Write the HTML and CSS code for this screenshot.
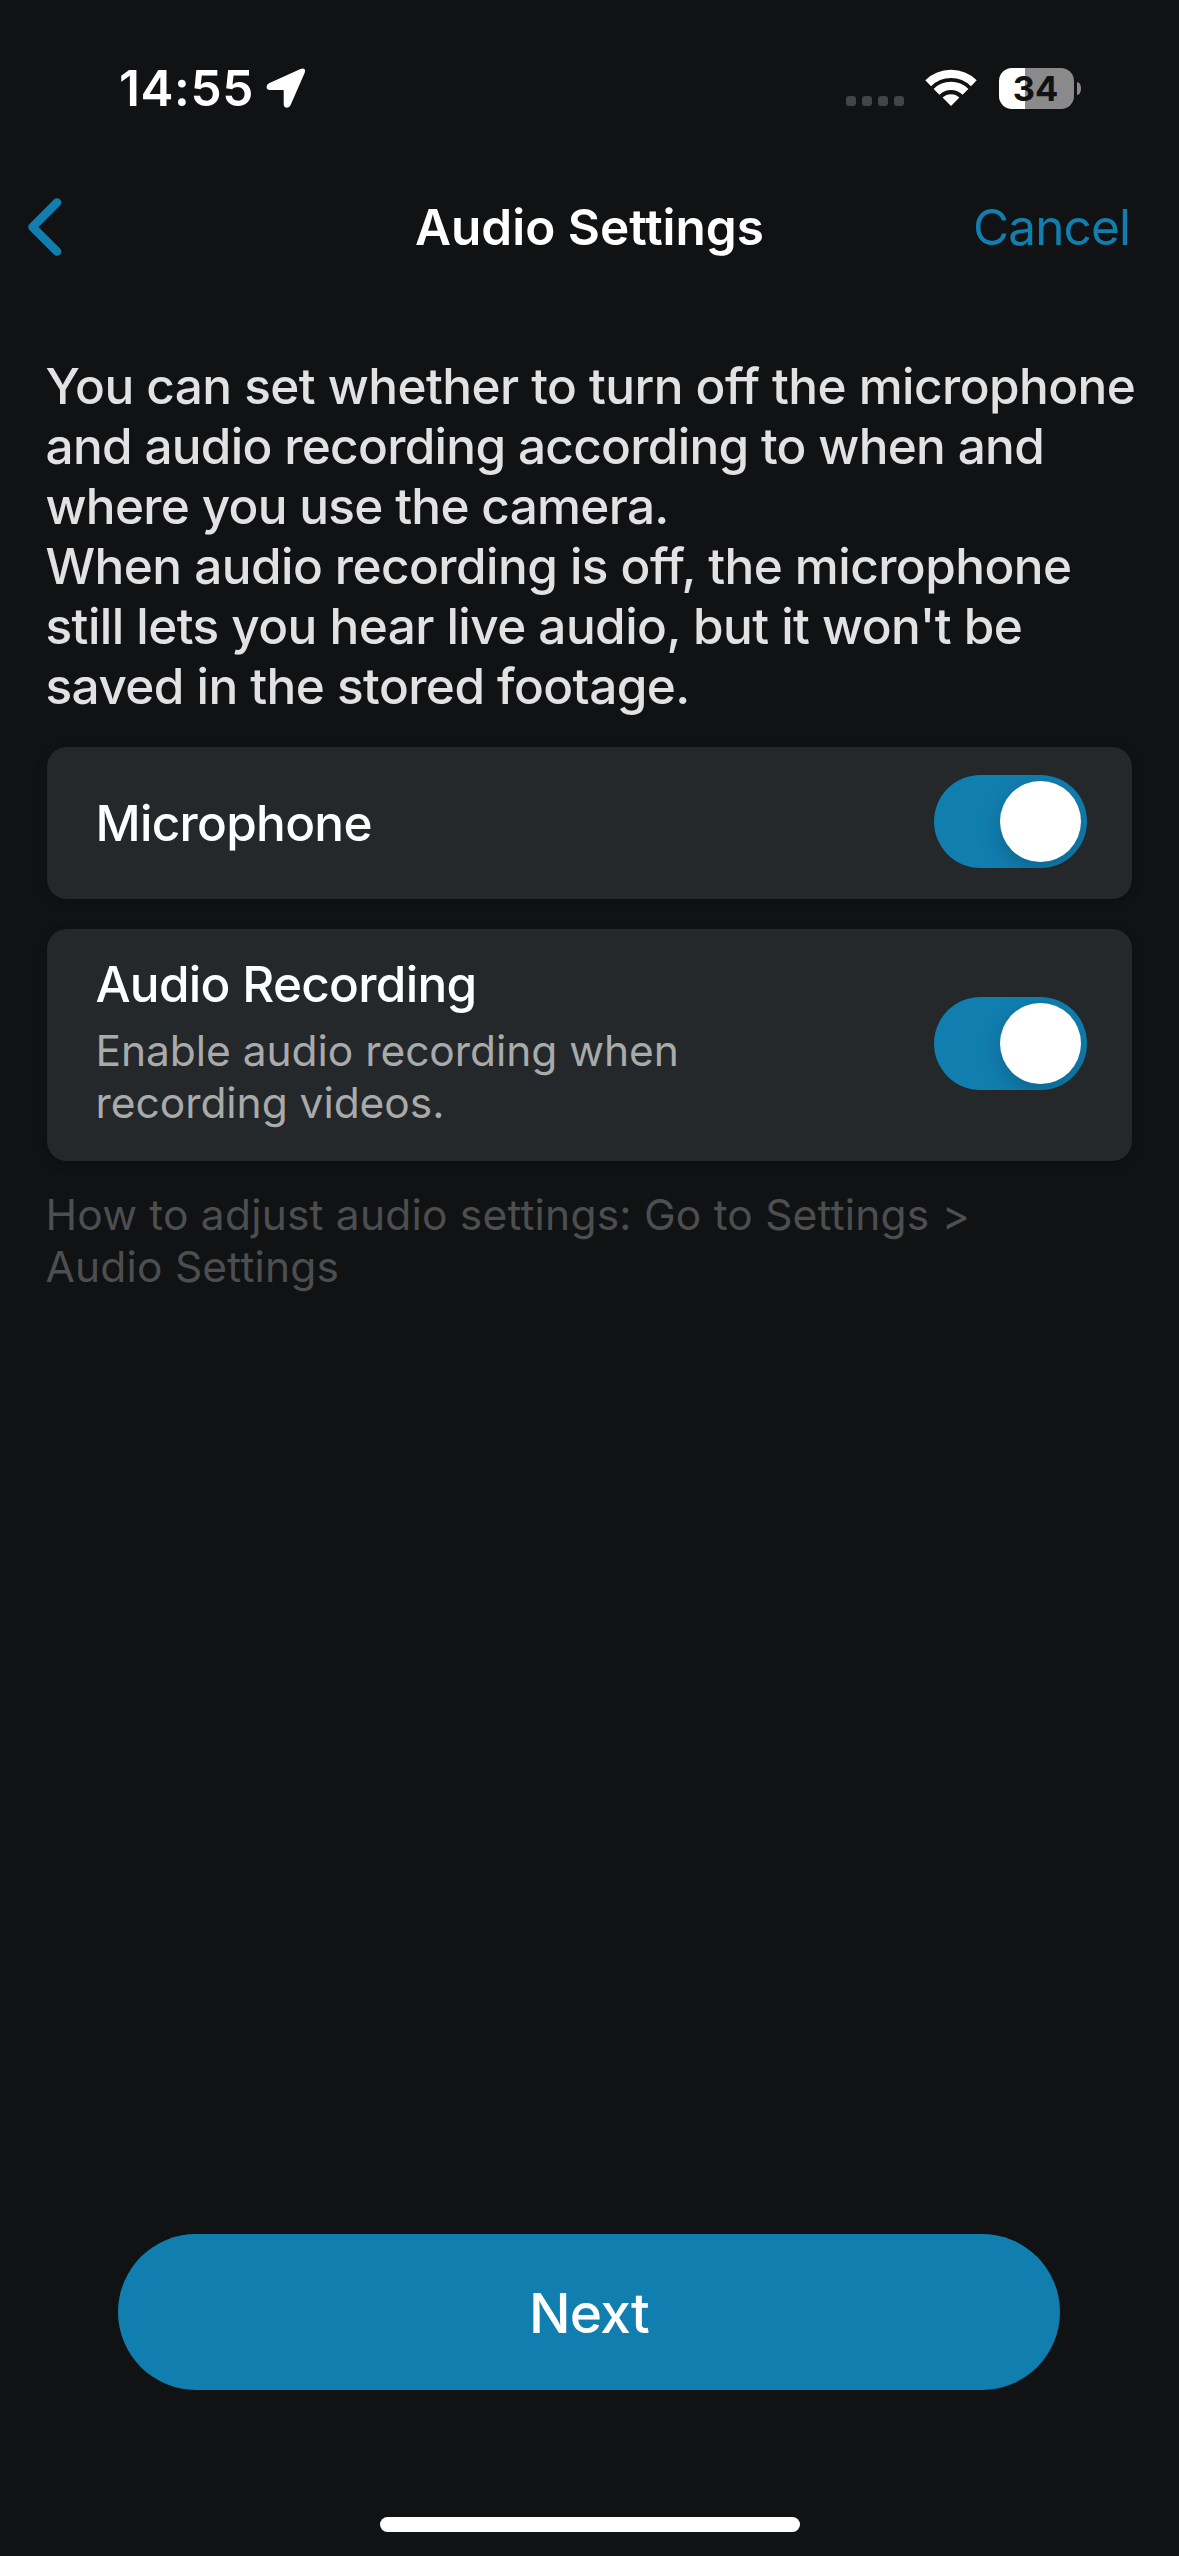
FILE: index.html
```html
<!DOCTYPE html>
<html lang="en">
<head>
<meta charset="utf-8">
<title>Audio Settings</title>
<link rel="stylesheet" href="styles.css">
</head>
<body>
<header class="status-bar">
  <div class="status-left">
    <span class="time">14:55</span>
    <svg class="location" viewBox="0 0 40 40" width="40" height="40"><path d="M3 15.2 L34.5 1 Q40.5 -0.8 38.6 5 L24.6 37 Q23.3 39.8 21 39.8 Q17.7 39.8 17.7 36 L17.7 22.6 Q17.7 22 17.1 22 L4 22 Q0.6 22 0.6 18.8 Q0.6 16.3 3 15.2 Z"/></svg>
  </div>
  <div class="status-right">
    <div class="signal"><i></i><i></i><i></i><i></i></div>
    <svg class="wifi" viewBox="0 0 52 38" width="52" height="38">
      <path class="arc" d="M3.2 14.2 A32.5 32.5 0 0 1 48.8 14.2"/>
      <path class="arc" d="M11.5 22.9 A20.7 20.7 0 0 1 40.5 22.9"/>
      <path class="dot" d="M26 37 L17.6 28.6 A12.2 12.2 0 0 1 34.4 28.6 Z"/>
    </svg>
    <div class="battery"><span class="battery-body">34</span><span class="battery-cap"></span></div>
  </div>
</header>
<nav class="nav">
  <svg class="back" viewBox="0 0 34 58" width="34" height="58"><path d="M29 4.5 L4.5 29 L29 53.5"/></svg>
  <h1 class="title">Audio Settings</h1>
  <a class="cancel">Cancel</a>
</nav>
<main class="content">
  <p class="intro">You can set whether to turn off the microphone<br><span class="tight">and audio recording according to when and<br>where you use the camera.</span><br>When audio recording is off, the microphone<br>still lets you hear live audio, but it won't be<br>saved in the stored footage.</p>
  <section class="card card-mic">
    <h2 class="label">Microphone</h2>
    <span class="toggle"><span class="knob"></span></span>
  </section>
  <section class="card card-rec">
    <div class="texts">
      <h2 class="label">Audio Recording</h2>
      <p class="desc">Enable audio recording when<br>recording videos.</p>
    </div>
    <span class="toggle"><span class="knob"></span></span>
  </section>
  <p class="hint">How to adjust audio settings: Go to Settings &gt;<br>Audio Settings</p>
</main>
<footer class="footer">
  <button class="next">Next</button>
  <div class="home-bar"></div>
</footer>
</body>
</html>
```
FILE: styles.css
```css
* { box-sizing: border-box; margin: 0; padding: 0; }

body {
  width: 1179px;
  height: 2556px;
  overflow: hidden;
  display: flex;
  flex-direction: column;
  background: #111213;
  color: #fff;
  font-family: Inter, "Liberation Sans", sans-serif;
  font-size: 49.5px;
  line-height: 60px;
}

.status-bar {
  height: 176px;
  padding: 0 98px 0 119px;
  display: flex;
  align-items: center;
  justify-content: space-between;
}
.status-left, .status-right { display: flex; align-items: center; }
.status-left { gap: 12px; }
.time { font-weight: 600; letter-spacing: .6px; }
.location { fill: #fff; }
.signal { display: flex; gap: 6px; margin: 26px 21px 0 0; }
.signal i { width: 10px; height: 10px; border-radius: 3px; background: #434446; }
.wifi { margin-right: 22px; }
.arc { fill: none; stroke: #fff; stroke-width: 8.3; }
.dot { fill: #fff; }
.battery { display: flex; align-items: center; gap: 3px; }
.battery-body {
  width: 75px;
  height: 41px;
  padding-right: 2px;
  border-radius: 13px;
  background: linear-gradient(90deg, #fff 26px, #8a8a8a 26px);
  color: #111213;
  font-size: 34.5px;
  font-weight: 700;
  line-height: 41px;
  text-align: center;
}
.battery-cap { width: 4px; height: 13px; border-radius: 0 4px 4px 0 / 0 6px 6px 0; background: #8a8a8a; }

.nav {
  height: 102px;
  padding: 0 28px;
  display: grid;
  grid-template-columns: 1fr auto 1fr;
  align-items: center;
}
.back { fill: none; stroke: #117eb0; stroke-width: 8.5; stroke-linecap: round; stroke-linejoin: round; }
.title { font-size: inherit; font-weight: 600; }
.cancel { justify-self: end; margin-right: 21px; color: #117eb0; letter-spacing: -.9px; }

.content { padding: 78px 47px 0 45.5px; }
.intro { color: #e2e2e2; font-weight: 500; letter-spacing: -.56px; margin-bottom: 31px; white-space: nowrap; }
.tight { letter-spacing: -.7px; }
.card {
  display: flex;
  justify-content: space-between;
  align-items: center;
  width: 1085px;
  margin-left: 1.5px;
  padding: 0 45px 0 48.5px;
  border-radius: 20px;
  background: #24282b;
  box-shadow: 0 3px 12px rgba(0, 0, 0, .2);
}
.card-mic { height: 152px; margin-bottom: 30px; }
.card-rec { height: 232px; }
.texts { margin-top: -7px; }
.label { font-size: inherit; font-weight: 500; letter-spacing: -.72px; }
.desc { margin-top: 11px; color: #a9aaaa; font-size: 42.5px; line-height: 52px; letter-spacing: -.05px; }
.toggle {
  width: 153px;
  height: 93px;
  margin-bottom: 3px;
  padding: 6px;
  border-radius: 47px;
  background: #117eb0;
  overflow: hidden;
  display: flex;
  justify-content: flex-end;
}
.knob { width: 81px; height: 81px; border-radius: 50%; background: #fff; box-shadow: 0 8px 22px rgba(0, 0, 0, .2); }
.hint { margin-top: 28px; color: #4d4e4f; font-size: 42.5px; line-height: 52px; letter-spacing: .2px; }

.footer { margin-top: auto; padding-bottom: 24px; display: flex; flex-direction: column; align-items: center; gap: 127px; }
.next {
  width: 942px;
  height: 156px;
  margin-right: 1px;
  padding-top: 2px;
  border: 0;
  border-radius: 78px;
  background: #117eb0;
  color: #fff;
  font: 500 55px/66px Inter, "Liberation Sans", sans-serif;
  letter-spacing: -.8px;
}
.home-bar { width: 420px; height: 15px; border-radius: 8px; background: #fff; }
```
